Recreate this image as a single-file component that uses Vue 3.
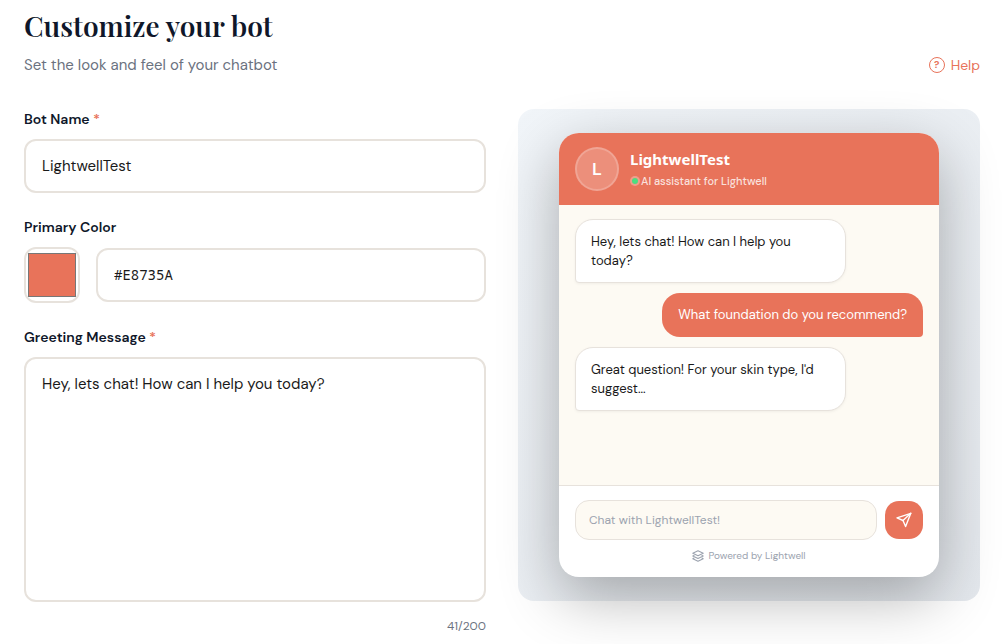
<script setup>
import { ref, computed } from 'vue'

const botName = ref('LightwellTest')
const primaryColor = ref('#E8735A')
const greeting = ref('Hey, lets chat! How can I help you today?')
const draft = ref('')

const maxLength = 200

// the native picker only takes lowercase hex
const pickerColor = computed({
  get: () => primaryColor.value.toLowerCase(),
  set: (val) => { primaryColor.value = val.toUpperCase() }
})

const initial = computed(() => botName.value.charAt(0).toUpperCase())

const messages = computed(() => [
  { from: 'bot', text: greeting.value },
  { from: 'user', text: 'What foundation do you recommend?' },
  { from: 'bot', text: "Great question! For your skin type, I'd suggest..." }
])
</script>

<template>
  <main class="page" :style="{ '--primary': primaryColor }">
    <header class="page-header">
      <div>
        <h1>Customize your bot</h1>
        <p class="subtitle">Set the look and feel of your chatbot</p>
      </div>
      <a href="#help" class="help-link">
        <span class="help-icon" aria-hidden="true">?</span>
        Help
      </a>
    </header>

    <div class="columns">
      <form class="settings" @submit.prevent>
        <div class="field">
          <label for="bot-name">Bot Name <span class="required">*</span></label>
          <input id="bot-name" v-model="botName" class="control" type="text">
        </div>

        <div class="field">
          <label for="color-hex">Primary Color</label>
          <div class="color-row">
            <input v-model="pickerColor" class="color-picker" type="color" aria-label="Pick primary color">
            <input id="color-hex" v-model="primaryColor" class="control mono" type="text">
          </div>
        </div>

        <div class="field">
          <label for="greeting">Greeting Message <span class="required">*</span></label>
          <textarea id="greeting" v-model="greeting" class="control" :maxlength="maxLength"></textarea>
          <div class="counter">{{ greeting.length }}/{{ maxLength }}</div>
        </div>
      </form>

      <section class="preview" aria-label="Preview">
        <div class="chat">
          <div class="chat-header">
            <div class="avatar">{{ initial }}</div>
            <div>
              <div class="chat-name">{{ botName }}</div>
              <div class="chat-status"><span class="dot"></span>AI assistant for Lightwell</div>
            </div>
          </div>

          <div class="chat-body">
            <div v-for="(msg, i) in messages" :key="i" class="bubble" :class="msg.from">{{ msg.text }}</div>
          </div>

          <div class="chat-footer">
            <div class="compose">
              <input v-model="draft" type="text" :placeholder="`Chat with ${botName}!`" aria-label="Message">
              <button type="button" class="send" aria-label="Send">
                <svg viewBox="0 0 16 16" fill="none" stroke="currentColor" stroke-width="1.4" stroke-linejoin="round" stroke-linecap="round">
                  <path d="M14.8 1.3 1 5.9l6 2.6 2.6 6z" />
                  <path d="M14.8 1.3 7 8.5" />
                </svg>
              </button>
            </div>
            <div class="powered">
              <svg viewBox="0 0 12 12" fill="none" stroke="currentColor" stroke-width="1.1" stroke-linejoin="round" stroke-linecap="round">
                <path d="M6 .8 11.2 3.3 6 5.8 .8 3.3z" />
                <path d="M2 5.4 .8 6 6 8.5 11.2 6 10 5.4" />
                <path d="M2 8.1l-1.2.6L6 11.2l5.2-2.5-1.2-.6" />
              </svg>
              Powered by Lightwell
            </div>
          </div>
        </div>
      </section>
    </div>
  </main>
</template>

<style>
body {
  background: #fff;
}
</style>

<style scoped>
.page {
  padding: 8px 28px 8px 24px;
  font-family: "DM Sans", Inter, "Liberation Sans", sans-serif;
  color: #1a1a1a;
}
.page *,
.page {
  box-sizing: border-box;
}

/* page header */
.page-header {
  display: flex;
  justify-content: space-between;
  align-items: flex-end;
  margin-bottom: 31px;
}
h1 {
  margin: 0 0 8px;
  font-family: "Playfair Display", "Liberation Serif", serif;
  font-size: 28px;
  line-height: 36px;
  font-weight: 600;
  color: #0f172a;
}
.subtitle {
  margin: 0;
  font-size: 15px;
  line-height: 26px;
  color: #6b7280;
}
.help-link {
  display: flex;
  align-items: center;
  gap: 6px;
  font-size: 14px;
  line-height: 26px;
  color: #e8735a;
  text-decoration: none;
}
.help-icon {
  width: 16px;
  height: 16px;
  border: 1px solid currentColor;
  border-radius: 50%;
  font-size: 10px;
  line-height: 14px;
  font-weight: 700;
  text-align: center;
}

.columns {
  display: grid;
  grid-template-columns: 1fr 1fr;
  gap: 32px;
  align-items: start;
}

/* form */
.settings {
  display: flex;
  flex-direction: column;
  gap: 24px;
}
.field {
  display: flex;
  flex-direction: column;
  gap: 10px;
}
label {
  font-size: 14px;
  line-height: 20px;
  font-weight: 600;
  color: #0f172a;
}
.required {
  color: #e8735a;
}
.control {
  width: 100%;
  min-width: 0;
  padding: 13px 16px;
  border: 2px solid #e7e2dc;
  border-radius: 12px;
  background: #fff;
  font-family: inherit;
  font-size: 15px;
  line-height: 24px;
  color: #1a1a1a;
  outline: none;
}
textarea.control {
  display: block;
  height: 245px;
  resize: none;
}
.color-row {
  display: flex;
  align-items: center;
  gap: 16px;
}
.color-picker {
  flex-shrink: 0;
  width: 56px;
  height: 56px;
  padding: 0;
  border: 2px solid #e7e2dc;
  border-radius: 12px;
  background: #fff;
  cursor: pointer;
}
.mono {
  font-family: "Noto Sans Mono", "DejaVu Sans Mono", monospace;
  font-size: 14px;
}
.counter {
  font-size: 12px;
  line-height: 28px;
  text-align: right;
  color: #6b7280;
}

/* preview */
.preview {
  padding: 24px;
  border-radius: 16px;
  background: linear-gradient(135deg, #f1f5f9, #e4e8ed);
}
.chat {
  max-width: 380px;
  margin: 0 auto;
  border-radius: 20px;
  background: #fff;
  box-shadow: 0 20px 60px rgba(0, 0, 0, 0.3);
}
.chat-header {
  display: flex;
  align-items: center;
  gap: 11px;
  padding: 14px 16px;
  border-radius: 20px 20px 0 0;
  background: var(--primary);
  color: #fff;
}
.avatar {
  width: 44px;
  height: 44px;
  border: 2px solid rgba(255, 255, 255, 0.2);
  border-radius: 50%;
  background: rgba(255, 255, 255, 0.2);
  font-size: 18px;
  line-height: 40px;
  font-weight: 600;
  text-align: center;
}
.chat-name {
  font-family: "Noto Sans", sans-serif;
  font-size: 15px;
  line-height: 24px;
  font-weight: 700;
}
.chat-status {
  display: flex;
  align-items: center;
  gap: 1px;
  font-size: 11px;
  line-height: 20px;
  font-weight: 500;
  color: rgba(255, 255, 255, 0.8);
}
.dot {
  width: 10px;
  height: 10px;
  border: 2px solid rgba(255, 255, 255, 0.3);
  border-radius: 50%;
  background: #4ade80;
  background-clip: padding-box;
}

.chat-body {
  display: flex;
  flex-direction: column;
  gap: 10px;
  min-height: 280px;
  padding: 14px 16px;
  background: #fdfaf3;
}
.bubble {
  font-size: 13px;
}
.bubble.bot {
  align-self: flex-start;
  max-width: 78%;
  padding: 12px 15px;
  border: 1px solid #e7e2dc;
  border-radius: 18px 18px 18px 4px;
  background: #fff;
  box-shadow: 0 1px 3px rgba(0, 0, 0, 0.05);
  line-height: 19px;
}
.bubble.user {
  align-self: flex-end;
  padding: 12px 16px;
  border-radius: 18px 18px 4px 18px;
  background: var(--primary);
  line-height: 20px;
  color: #fff;
}

.chat-footer {
  padding: 14px 16px;
  border-top: 1px solid #e7e2dc;
}
.compose {
  display: flex;
  align-items: center;
  gap: 8px;
}
.compose input {
  flex: 1;
  min-width: 0;
  height: 40px;
  padding: 0 13px;
  border: 1px solid #e7e2dc;
  border-radius: 14px;
  background: #fdfaf3;
  font-family: inherit;
  font-size: 12px;
  outline: none;
}
.compose input::placeholder {
  color: #9ca3af;
}
.send {
  display: flex;
  align-items: center;
  justify-content: center;
  width: 38px;
  height: 38px;
  padding: 0;
  border: none;
  border-radius: 14px;
  background: var(--primary);
  color: #fff;
  cursor: pointer;
}
.send svg {
  width: 16px;
  height: 16px;
}
.powered {
  display: flex;
  align-items: center;
  justify-content: center;
  gap: 4px;
  margin-top: 8px;
  font-size: 10px;
  line-height: 15px;
  color: #9ca3af;
}
.powered svg {
  width: 12px;
  height: 12px;
}
</style>
